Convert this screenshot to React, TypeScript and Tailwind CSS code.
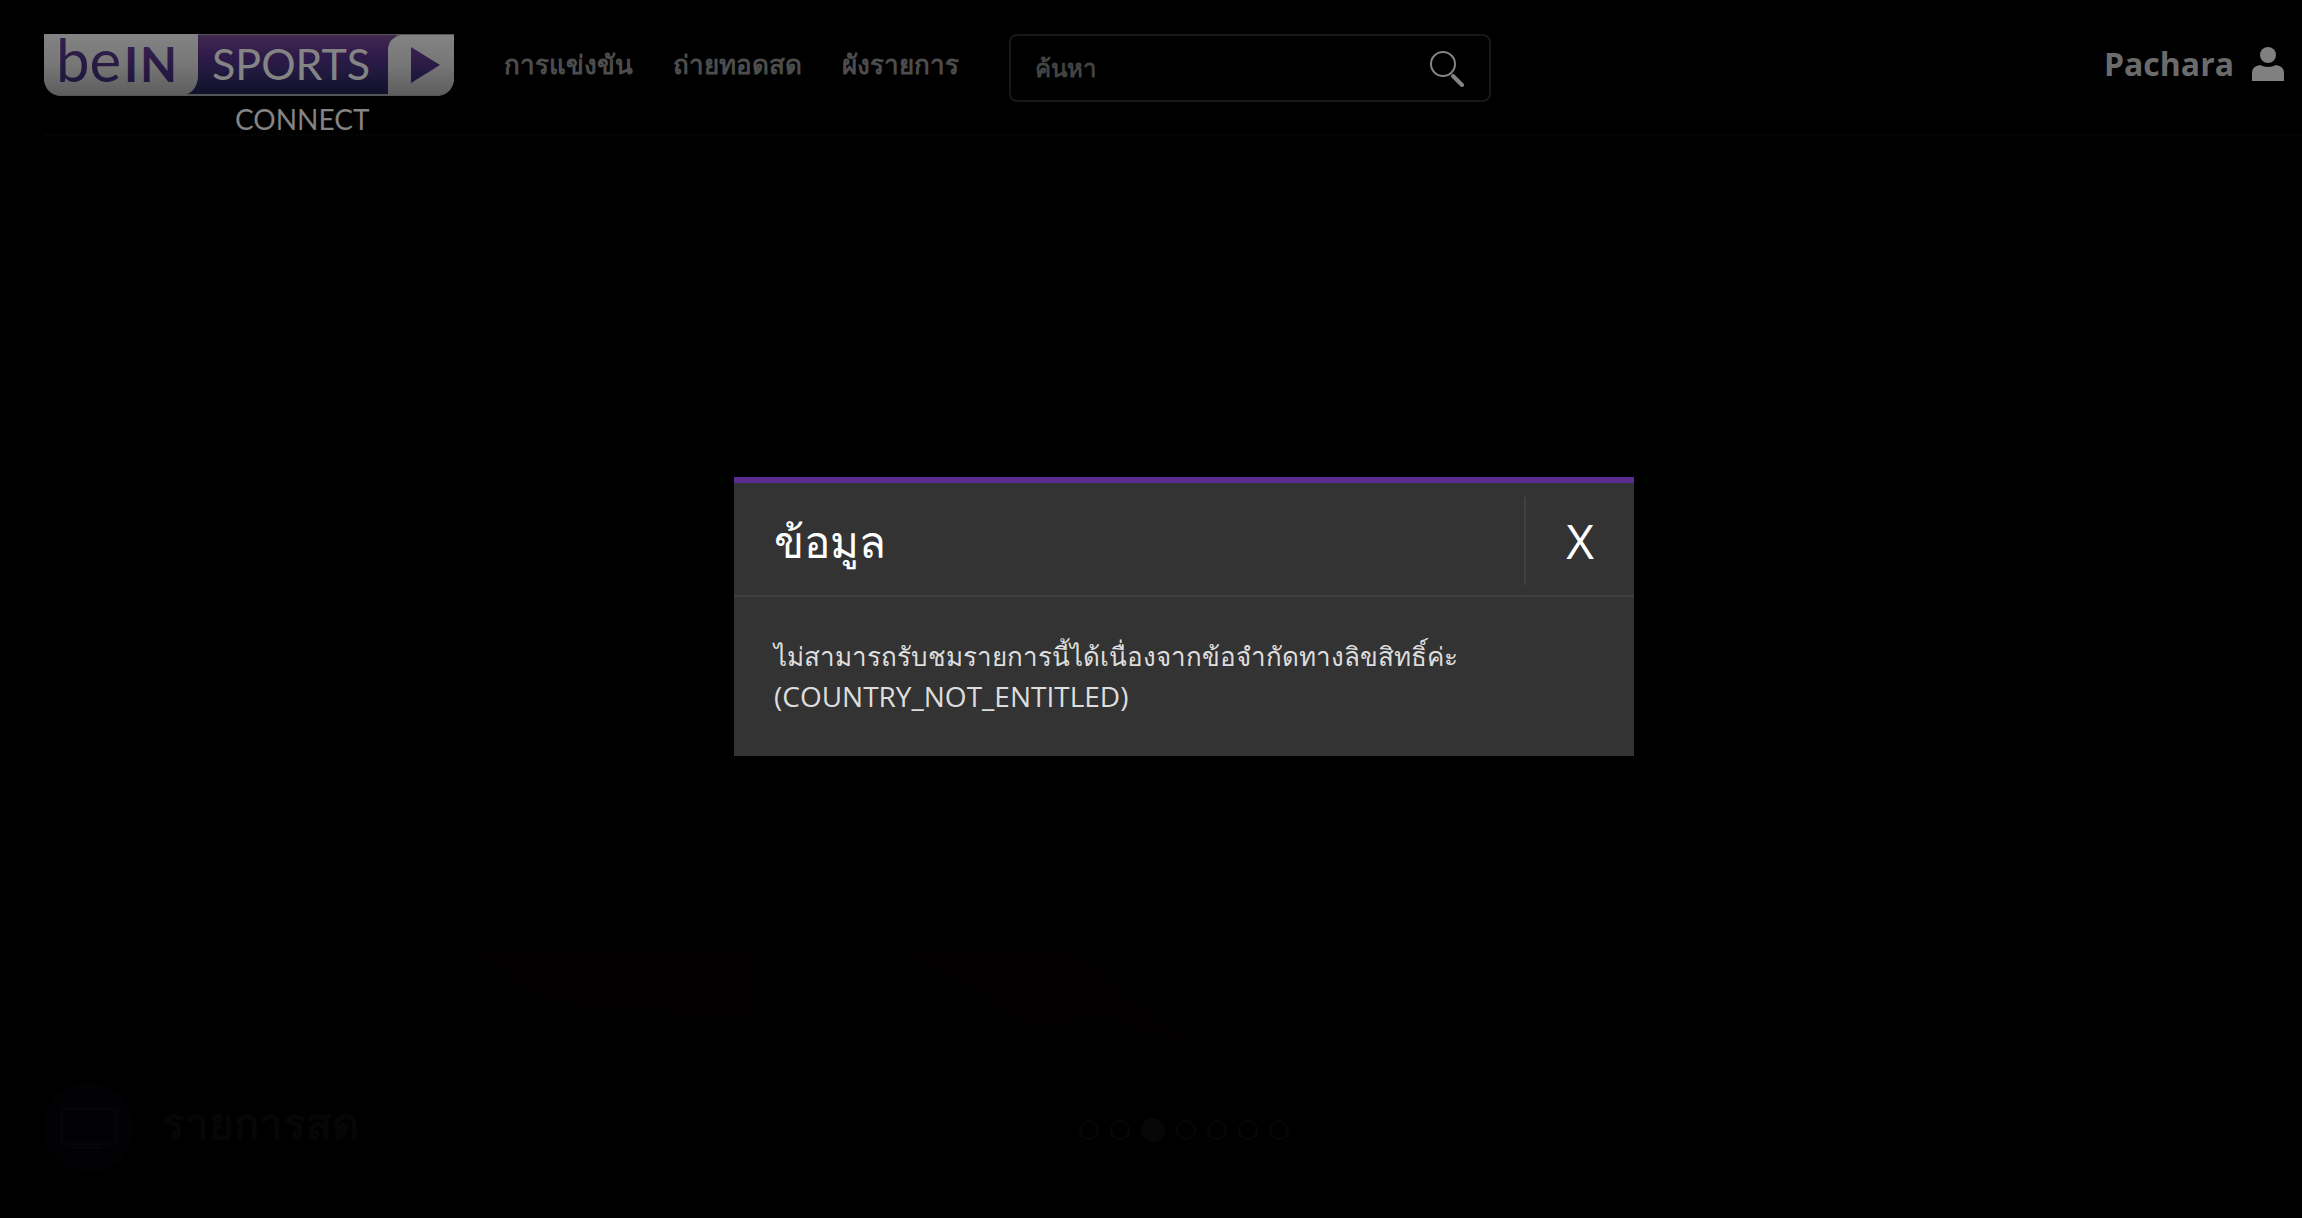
import { useState } from "react"

const navItems = ["การแข่งขัน", "ถ่ายทอดสด", "ผังรายการ"]
const slides = [0, 1, 2, 3, 4, 5, 6]

function Logo() {
  return (
    <svg
      className="overflow-visible"
      width="412"
      height="100"
      viewBox="0 0 412 100"
      role="img"
      aria-label="beIN SPORTS CONNECT"
    >
      <defs>
        <linearGradient id="silver" x1="0" y1="0" x2="0" y2="1">
          <stop offset="0" stopColor="#838383" />
          <stop offset="0.5" stopColor="#777777" />
          <stop offset="1" stopColor="#5d5d5d" />
        </linearGradient>
        <linearGradient id="purple" x1="0" y1="0" x2="0" y2="1">
          <stop offset="0" stopColor="#43294f" />
          <stop offset="0.35" stopColor="#2f1a4a" />
          <stop offset="0.6" stopColor="#221a40" />
          <stop offset="1" stopColor="#10112a" />
        </linearGradient>
        <linearGradient id="ink" x1="0" y1="0" x2="0" y2="1">
          <stop offset="0" stopColor="#3c2150" />
          <stop offset="1" stopColor="#17153a" />
        </linearGradient>
      </defs>
      <path d="M0 0H410V46Q408 60 395 62H15Q2 60 0 46Z" fill="#555555" />
      <path d="M154 1H352V60H140Z" fill="url(#purple)" />
      <path d="M0 0H154V43Q153 57 141 61H15Q2 59 0 46Z" fill="url(#silver)" />
      <path d="M357 1H410V46Q408 59 395 61H344V14Q345 4 357 1Z" fill="url(#silver)" />
      <path d="M367 13L396 31L367 49Z" fill="url(#ink)" />
      <g fontFamily="Lato, sans-serif">
        <text x="12" y="48" fontSize="60" fill="url(#ink)">be</text>
        <text x="80" y="48" fontSize="48" fontWeight="700" fill="url(#ink)">I</text>
        <text x="96" y="48" fontSize="48" fontWeight="700" fill="url(#ink)">N</text>
        <text x="168" y="46" fontSize="43" fill="#848484">SPORTS</text>
        <text x="191" y="96" fontSize="28" fill="#848484">CONNECT</text>
      </g>
    </svg>
  )
}

function SearchIcon() {
  return (
    <svg width="36" height="38" viewBox="0 0 36 38" fill="none" stroke="#848484" aria-hidden="true">
      <circle cx="14" cy="15" r="12" strokeWidth="2" />
      <path d="M24 27L33 36" strokeWidth="4" strokeLinecap="round" />
    </svg>
  )
}

function UserIcon() {
  return (
    <svg width="32" height="34" viewBox="0 0 32 34" fill="#808080" aria-hidden="true">
      <ellipse cx="16" cy="8" rx="8" ry="8" />
      <path d="M0 34V26Q0 19 8 18Q16 22 24 18Q32 19 32 26V34Z" />
    </svg>
  )
}

function TvIcon() {
  return (
    <svg width="90" height="90" viewBox="0 0 90 90" fill="none" stroke="#060608" strokeWidth="2" aria-hidden="true">
      <circle cx="45" cy="45" r="45" fill="#020205" stroke="none" />
      <rect x="18" y="27" width="54" height="35" />
      <path d="M38 62V65M52 62V65M33 66H57" />
    </svg>
  )
}

function Header() {
  return (
    <header className="ml-11 flex h-[102px] items-start border-b-2 border-[#040404]">
      <a href="#" className="mr-12 shrink-0">
        <Logo />
      </a>
      <nav className="flex gap-10 pt-2.5 text-[26px] leading-10 font-bold whitespace-nowrap text-[#4d4d4d]">
        {navItems.map((item) => (
          <a key={item} href="#">
            {item}
          </a>
        ))}
      </nav>
      <form className="ml-[50px] flex h-[68px] w-[482px] shrink-0 items-center rounded-lg border-2 border-[#171717] px-6">
        <input
          type="text"
          aria-label="ค้นหา"
          placeholder="ค้นหา"
          className="min-w-0 grow bg-transparent text-2xl font-semibold text-[#808080] outline-none placeholder:text-[#434343]"
        />
        <button type="button" aria-label="ค้นหา">
          <SearchIcon />
        </button>
      </form>
      <a href="#" className="mr-[18px] ml-auto flex items-center gap-[18px] pt-2 text-[32px] leading-11 font-bold text-[#6b6b6b]">
        Pachara
        <UserIcon />
      </a>
    </header>
  )
}

function Banner() {
  return (
    <svg className="absolute bottom-0 left-[450px]" width="800" height="274" viewBox="0 0 800 274" aria-hidden="true">
      <path d="M20 3H315L310 80L170 66L95 60L50 26Z" fill="#030001" />
      <path d="M430 3H620L748 105L640 72L590 88L520 47Z" fill="#030001" />
      <path d="M115 110H150V225H118V165L85 208H50Z" fill="#010101" />
      <path d="M153 225Q155 155 200 155Q235 155 235 210V165H268L260 222H212Q212 190 197 190Q175 190 172 230Z" fill="#010101" />
    </svg>
  )
}

export default function App() {
  const [open, setOpen] = useState(true)
  const [active, setActive] = useState(2)

  return (
    <div className="flex min-h-screen flex-col bg-black pt-[34px] font-['Open_Sans','Noto_Sans',sans-serif]">
      <Header />

      <main className="relative flex grow flex-col justify-end pb-[46px]">
        <Banner />
        <div className="relative grid grid-cols-3 items-center pl-11">
          <h2 className="flex items-start gap-7 text-[42px] leading-[82px] font-bold text-[#060606]">
            <TvIcon />
            รายการสด
          </h2>
          <div className="flex items-center justify-center gap-[11px] pt-1.5 pl-[22px]">
            {slides.map((slide) => (
              <button
                key={slide}
                type="button"
                aria-label={`${slide + 1}`}
                onClick={() => setActive(slide)}
                className={
                  slide === active
                    ? "size-6 rounded-full bg-[#070707]"
                    : "size-5 rounded-full border-2 border-[#070707]"
                }
              />
            ))}
          </div>
        </div>
      </main>

      {open && (
        <div className="fixed inset-0 flex items-center justify-center pt-3.5 pl-[66px]">
          <section role="dialog" aria-labelledby="dialog-title" className="w-[900px] border-t-6 border-[#5c2d91] bg-[#333333]">
            <div className="flex items-center justify-between border-b-2 border-[#404040] pt-3.5 pb-2.5 pl-10">
              <h1 id="dialog-title" className="text-[44px] leading-[88px] text-white">
                ข้อมูล
              </h1>
              <button
                type="button"
                onClick={() => setOpen(false)}
                className="h-[88px] w-[110px] border-l-2 border-[#404040] text-5xl text-white"
              >
                X
              </button>
            </div>
            <p className="px-10 pt-[38px] pb-10 text-[28px] leading-10 text-[#dddddd]">
              <span className="text-[26px]">ไม่สามารถรับชมรายการนี้ได้เนื่องจากข้อจำกัดทางลิขสิทธิ์ค่ะ</span>
              <br />
              (COUNTRY_NOT_ENTITLED)
            </p>
          </section>
        </div>
      )}
    </div>
  )
}
